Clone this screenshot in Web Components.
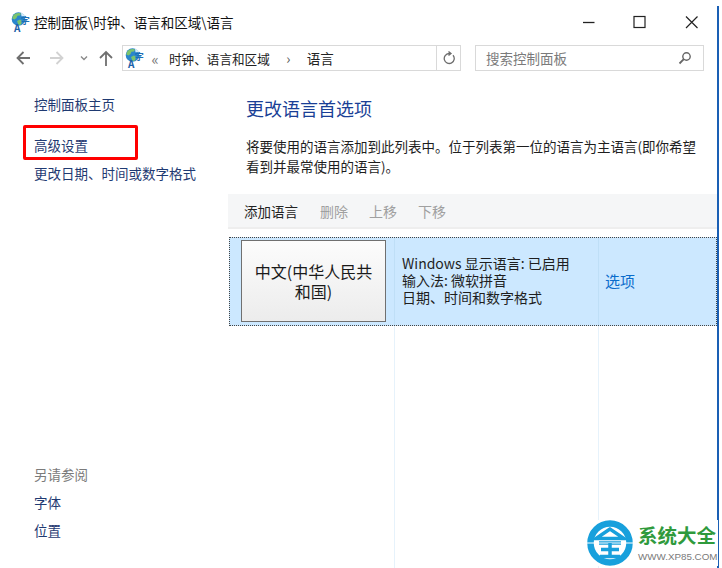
<!DOCTYPE html>
<html lang="zh">
<head>
<meta charset="utf-8">
<title>语言</title>
<style>
  html, body { margin: 0; padding: 0; background: #fff; }
  body { width: 722px; height: 568px; overflow: hidden; font: 14px "Noto Sans CJK SC", "Noto Sans", sans-serif; color: #1e1e1e; }
</style>
</head>
<body>
<lang-window>
  <cp-sidebar slot="side">
    <side-link>控制面板主页</side-link>
    <side-link>高级设置</side-link>
    <side-link>更改日期、时间或数字格式</side-link>
  </cp-sidebar>
  <lang-panel slot="main"></lang-panel>
</lang-window>

<script>
class GlobeIcon extends HTMLElement {
  constructor() {
    super();
    this.attachShadow({ mode: 'open' });
    this.shadowRoot.innerHTML = `
      <style>
        :host { display: inline-block; width: 19px; height: 20px; line-height: 0; flex: none; }
        svg { width: 100%; height: 100%; overflow: visible; }
        text { font-family: "Noto Sans CJK SC", sans-serif; }
      </style>
      <svg viewBox="0 0 19 20">
        <circle cx="7.500" cy="7" r="6.800" fill="#2a86cc"/>
        <path d="M2.500 3C4.500 .8 8 .4 10 1.500L9 3.500 6.500 3.800 5.500 6 3.500 7.500 1.200 6.500z" fill="#7cc46c"/>
        <path d="M6 9l3-1.500 2 1.500-1 3.500-2.500.5z" fill="#7cc46c"/>
        <path d="M10 .8c1.800.5 3.200 1.700 3.800 3.200l-3.300.3z" fill="#d6ecf9"/>
        <text x="9.800" y="11.500" font-size="9" font-weight="700" fill="#1b6fb5">字</text>
        <text x="3" y="19.800" font-size="10" font-weight="700" fill="#1d5fa8">A</text>
      </svg>`;
  }
}
customElements.define('globe-icon', GlobeIcon);

class WinTitlebar extends HTMLElement {
  constructor() {
    super();
    this.attachShadow({ mode: 'open' });
    this.shadowRoot.innerHTML = `
      <style>
        :host { display: flex; align-items: center; height: 45px; padding-left: 11px; box-sizing: border-box; padding-bottom: 2px; }
        .t { margin-left: 4px; flex: 1; font-size: 13.500px; color: #111; white-space: nowrap; }
        .c { display: block; width: 50px; height: 30px; }
        .btns { display: flex; gap: 3px; margin-right: 1px; }
      </style>
      <globe-icon></globe-icon>
      <span class="t">控制面板\\时钟、语言和区域\\语言</span>
      <div class="btns">
        <svg class="c" viewBox="0 0 50 30"><path d="M22 15.500h11.500" stroke="#222" stroke-width="1.300"/></svg>
        <svg class="c" viewBox="0 0 50 30"><rect x="20" y="9.500" width="11" height="11" fill="none" stroke="#222" stroke-width="1.200"/></svg>
        <svg class="c" viewBox="0 0 50 30"><path d="M19 9.500l11.500 11.500M30.500 9.500L19 21" stroke="#222" stroke-width="1.200"/></svg>
      </div>`;
  }
}
customElements.define('win-titlebar', WinTitlebar);

class WinNavbar extends HTMLElement {
  constructor() {
    super();
    this.attachShadow({ mode: 'open' });
    this.shadowRoot.innerHTML = `
      <style>
        :host { display: flex; align-items: center; height: 26px; padding-left: 16px; box-sizing: border-box; }
        svg { display: block; flex: none; }
        .nav { display: flex; align-items: center; width: 106px; flex: none; }
        .addr { display: flex; align-items: center; width: 339px; height: 26px; box-sizing: border-box; border: 1px solid #d9d9d9; padding-left: 2px; flex: none; font-size: 13.500px; color: #222; }
        .addr .txt { flex: 1; white-space: nowrap; }
        .addr .chev { color: #777; margin: 0 9px 0 6px; font-size: 15px; width: 10px; text-align: center; }
        .addr .sep { display: inline-block; width: 37px; text-align: center; color: #555; font-size: 14px; }
        .addr .crumb { font-size: 12.600px; }
        .ref { width: 23px; height: 24px; border-left: 1px solid #d9d9d9; display: flex; align-items: center; justify-content: center; }
        .search { display: flex; align-items: center; margin-left: 14px; width: 229px; height: 26px; box-sizing: border-box; border: 1px solid #d9d9d9; padding: 0 11px 0 10px; color: #7a7a7a; font-size: 13.500px; flex: none; }
        .search span { flex: 1; }
      </style>
      <div class="nav">
        <svg width="14" height="14" viewBox="0 0 14 14"><path d="M14 7H1.500M7.500 1L1.500 7l6 6" fill="none" stroke="#6f6f6f" stroke-width="1.800"/></svg>
        <svg style="margin-left:20px" width="14" height="14" viewBox="0 0 14 14"><path d="M0 7h12.500M6.500 1l6 6-6 6" fill="none" stroke="#d2d2d2" stroke-width="1.800"/></svg>
        <svg style="margin-left:15px" width="10" height="8" viewBox="0 0 10 8"><path d="M2 2.500L5 5.500 8 2.500" fill="none" stroke="#8a8a8a" stroke-width="1.400"/></svg>
        <svg style="margin-left:10px" width="14" height="16" viewBox="0 0 14 16"><path d="M7 16V2M1 8L7 2l6 6" fill="none" stroke="#6f6f6f" stroke-width="1.800"/></svg>
      </div>
      <div class="addr">
        <globe-icon></globe-icon>
        <span class="chev">«</span>
        <span class="txt"><span class="crumb">时钟、语言和区域</span><span class="sep">›</span>语言</span>
        <span class="ref">
          <svg width="14" height="14" viewBox="0 0 14 14"><path d="M11 4.200A5 5 0 1 1 7 2.500H9M6.500 0.500L9 2.500 6.500 4.500" fill="none" stroke="#6d6d6d" stroke-width="1.300"/></svg>
        </span>
      </div>
      <div class="search">
        <span>搜索控制面板</span>
        <svg width="14" height="14" viewBox="0 0 14 14"><circle cx="8.500" cy="5.500" r="3.700" fill="none" stroke="#666" stroke-width="1.400"/><path d="M5.800 8.200L1.500 12.500" stroke="#666" stroke-width="1.800"/></svg>
      </div>`;
  }
}
customElements.define('win-navbar', WinNavbar);

class SideLink extends HTMLElement {
  constructor() {
    super();
    this.attachShadow({ mode: 'open' });
    this.shadowRoot.innerHTML = `
      <style>
        :host { display: block; font-size: 13.500px; line-height: 20px; color: var(--link, #1f3a72); white-space: nowrap; }
      </style>
      <slot></slot>`;
  }
}
customElements.define('side-link', SideLink);

class CpSidebar extends HTMLElement {
  constructor() {
    super();
    this.attachShadow({ mode: 'open' });
    this.shadowRoot.innerHTML = `
      <style>
        :host { display: flex; flex-direction: column; width: 228px; flex: none; box-sizing: border-box; padding: 13px 0 28px 34px; height: 100%; position: relative; }
        .top { display: flex; flex-direction: column; flex: 1; }
        ::slotted(side-link:nth-child(2)) { margin-top: 21px; }
        ::slotted(side-link:nth-child(3)) { margin-top: 8px; }
        .also { display: flex; flex-direction: column; gap: 8px; }
        .head { color: #7b7b7b; font-size: 13.500px; line-height: 20px; }
        .mark { position: absolute; left: 23px; top: 44px; width: 115px; height: 35px; box-sizing: border-box; border: 3px solid #f00; border-radius: 2px; }
      </style>
      <div class="top"><slot></slot></div>
      <div class="also">
        <div class="head">另请参阅</div>
        <side-link>字体</side-link>
        <side-link>位置</side-link>
      </div>
      <div class="mark"></div>`;
  }
}
customElements.define('cp-sidebar', CpSidebar);

class LangRow extends HTMLElement {
  constructor() {
    super();
    this.attachShadow({ mode: 'open' });
    this.shadowRoot.innerHTML = `
      <style>
        :host { display: grid; grid-template-columns: 164px 204px 1fr; height: 89px; margin: 0 1px 0 1px; box-sizing: border-box; background: #cce8ff; border: 1px dotted #444; }
        .name { display: flex; padding: 2px 8px 3px 11px; }
        .btn { flex: 1; display: flex; align-items: center; justify-content: center; text-align: center; box-sizing: border-box; border: 1px solid #707070; background: linear-gradient(#fcfcfc, #ececec); line-height: 20px; font-size: 16px; color: #1a1a1a; padding: 0 11px; }
        .info { border-left: 1px solid #bfdff7; padding-left: 7px; display: flex; flex-direction: column; justify-content: center; line-height: 17px; color: #1e1e1e; white-space: nowrap; font-size: 14px; padding-bottom: 3px; }
        .opt { border-left: 1px solid #bfdff7; padding: 0 0 3px 6px; display: flex; align-items: center; color: #0a6ccc; font-size: 15px; }
      </style>
      <div class="name"><div class="btn">中文(中华人民共和国)</div></div>
      <div class="info">
        <div>Windows 显示语言: 已启用</div>
        <div>输入法: 微软拼音</div>
        <div>日期、时间和数字格式</div>
      </div>
      <div class="opt">选项</div>`;
  }
}
customElements.define('lang-row', LangRow);

class LangPanel extends HTMLElement {
  constructor() {
    super();
    this.attachShadow({ mode: 'open' });
    this.shadowRoot.innerHTML = `
      <style>
        :host { display: flex; flex-direction: column; flex: 1; min-width: 0; height: 100%; }
        h1 { margin: 14px 0 0 18px; font-size: 18px; line-height: 26px; font-weight: 400; color: #1a3f96; }
        p { margin: 15px 0 0 18px; font-size: 13.500px; line-height: 20px; color: #1e1e1e; width: 460px; }
        .tools { display: flex; gap: 21px; align-items: center; height: 33px; margin-top: 18px; padding-left: 16px; background: #f5f6f7; border-bottom: 2px solid #eeeeee; font-size: 14px; color: #a0a0a0; }
        .tools b { font-weight: 400; font-size: 13.500px; color: #222; margin-right: 1px; }
        .list { flex: 1; margin-top: 8px; display: flex; flex-direction: column; }
        .rest { flex: 1; display: grid; grid-template-columns: 165px 204px 1fr; margin-left: 1px; }
        .rest div + div { border-left: 1px solid #e6f2fb; }
      </style>
      <h1>更改语言首选项</h1>
      <p>将要使用的语言添加到此列表中。位于列表第一位的语言为主语言(即你希望看到并最常使用的语言)。</p>
      <div class="tools"><b>添加语言</b><span>删除</span><span>上移</span><span>下移</span></div>
      <div class="list">
        <lang-row></lang-row>
        <div class="rest"><div></div><div></div><div></div></div>
      </div>`;
  }
}
customElements.define('lang-panel', LangPanel);

class XpWatermark extends HTMLElement {
  constructor() {
    super();
    this.attachShadow({ mode: 'open' });
    this.shadowRoot.innerHTML = `
      <style>
        :host { position: absolute; left: 587px; top: 520px; width: 131px; height: 46px; display: flex; align-items: flex-start; background: #fff; }
        svg { display: block; flex: none; width: 46px; height: 46px; }
        .w { margin: 4px 0 0 5px; white-space: nowrap; }
        .big { font: 700 19.500px/22px "Noto Sans CJK SC", sans-serif; color: #2f9a3c; }
        .url { font: 9.800px/12px "Liberation Sans", sans-serif; color: #7a7a7a; margin-top: 5px; }
      </style>
      <svg viewBox="0 0 46 46">
        <circle cx="23" cy="23" r="19.500" fill="none" stroke="#18a0dc" stroke-width="6.500"/>
        <path d="M23 9L9 18.500h28zM12 23h22" fill="none" stroke="#18a0dc" stroke-width="3.500"/>
        <path d="M0 23h46" stroke="#fff" stroke-width="1.200"/>
        <path d="M14 29.500h18M23 23v14M13 36.500h20" fill="none" stroke="#18a0dc" stroke-width="3.500"/>
      </svg>
      <div class="w"><div class="big">系统大全</div><div class="url">WWW.XP85.COM</div></div>`;
  }
}
customElements.define('xp-watermark', XpWatermark);

class LangWindow extends HTMLElement {
  constructor() {
    super();
    this.attachShadow({ mode: 'open' });
    this.shadowRoot.innerHTML = `
      <style>
        :host { display: block; position: relative; width: 722px; height: 568px; box-sizing: border-box; padding-right: 4px; }
        .frame { display: flex; flex-direction: column; height: 100%; position: relative; }
        .body { flex: 1; display: flex; min-height: 0; padding-top: 10px; }
        .edge { position: absolute; left: 717px; top: 6px; bottom: 0; width: 2px; background: #1a5fb4; }
      </style>
      <div class="frame">
        <win-titlebar></win-titlebar>
        <win-navbar></win-navbar>
        <div class="body">
          <slot name="side"></slot>
          <slot name="main"></slot>
        </div>
      </div>
      <div class="edge"></div>
      <xp-watermark></xp-watermark>`;
  }
}
customElements.define('lang-window', LangWindow);
</script>
</body>
</html>
